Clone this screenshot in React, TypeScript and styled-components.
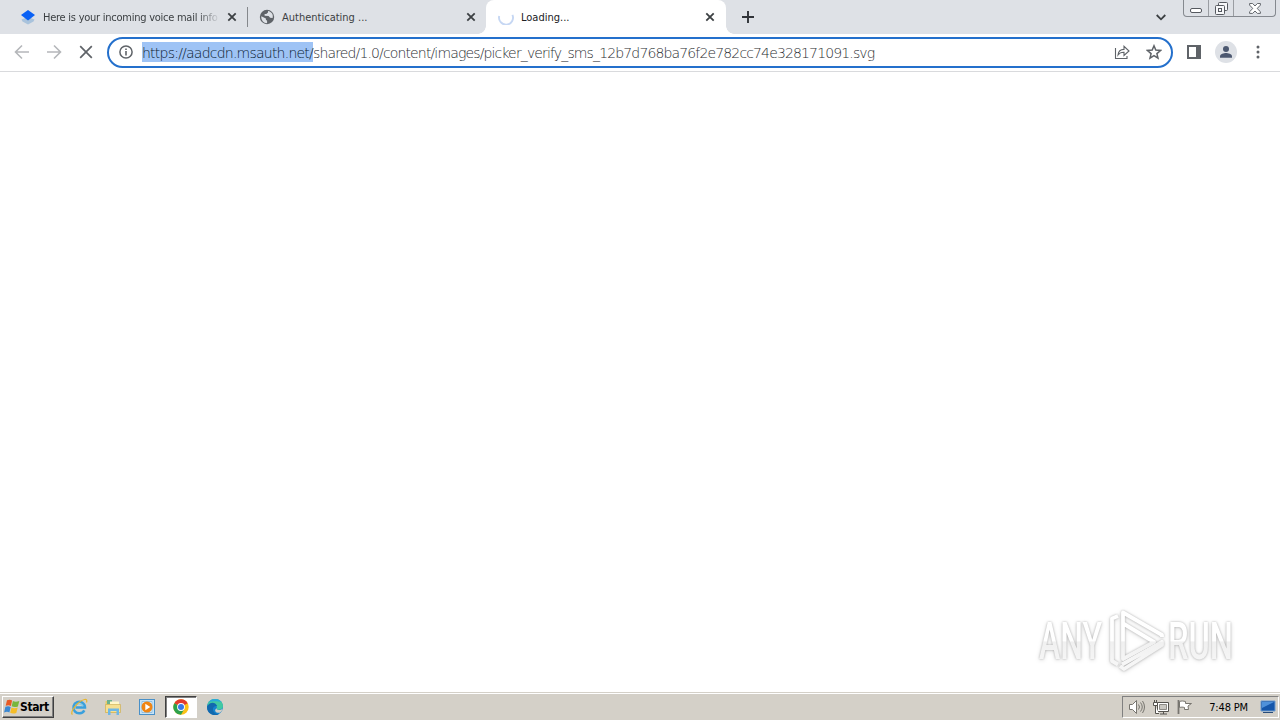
import type { ReactNode } from "react";
import styled, { createGlobalStyle, css } from "styled-components";

const GlobalStyle = createGlobalStyle`
  * {
    box-sizing: border-box;
  }
  body {
    margin: 0;
    overflow: hidden;
    background: #fff;
    font-family: "DejaVu Sans Condensed", "DejaVu Sans", sans-serif;
  }
  svg {
    display: block;
    flex: none;
  }
`;

function CloseIcon() {
  return (
    <svg width="10" height="10" viewBox="0 0 10 10" stroke="#3c4043" strokeWidth="1.8">
      <path d="M1.300 1.300l7.400 7.400M8.700 1.300l-7.400 7.400" />
    </svg>
  );
}

function DropboxIcon() {
  return (
    <svg width="16" height="16" viewBox="0 0 16 16">
      <path d="M1.500 10.500L8 8l6.500 2.500-1 2L8 15.500l-5.500-3z" fill="#a9c3dc" />
      <path d="M8 1l7 5-7 5.400L1 6z" fill="#0a61f5" />
    </svg>
  );
}

function GlobeIcon() {
  return (
    <svg width="16" height="16" viewBox="0 0 16 16">
      <circle cx="8" cy="8" r="7.200" fill="#5f6368" />
      <path d="M2.300 7.200l4.600 2.300v1.300l1.200 1v2.400C4.500 14.100 1.900 11 2.300 7.200zM9 2v1.600L7.300 5H5.600v1.700l4 .3 1.500 1.800 2.500.2c1-3.300-.9-6.300-4.600-7z" fill="#dee1e6" />
    </svg>
  );
}

function Spinner() {
  return (
    <svg width="16" height="16" viewBox="0 0 16 16" fill="none">
      <path d="M1.200 7a7 7 0 1 0 13.200-1.200" stroke="#c6d7f3" strokeWidth="1.900" />
    </svg>
  );
}

function StartFlag() {
  return (
    <svg width="16" height="16" viewBox="0 0 16 16">
      <path d="M3 1.200c2-.8 3.700-.7 5.100.3L6.900 7C5.300 6.100 3.800 6 1.700 6.800z" fill="#e85a24" />
      <path d="M8.900 2c1.800 1 3.700 1 6.400.1l-1.400 5.400c-2.300.8-4.300.8-6.200-.2z" fill="#78b63c" />
      <path d="M1.400 7.800c2.100-.8 3.700-.7 5.300.2l-1.300 5.400c-1.500-.9-3.200-.9-5.300 0z" fill="#3b88d2" />
      <path d="M7.500 8.500c1.900.9 3.800.9 6.200.1l-1.400 5.300c-2.400.8-4.200.8-6.100-.2z" fill="#f5bd28" />
    </svg>
  );
}

function ExplorerIcon() {
  return (
    <svg width="18" height="18" viewBox="0 0 18 18" fill="none">
      <path d="M14.300 12.300A5.800 5.800 0 1 1 15 9.500H5.500" stroke="#3aa0dd" strokeWidth="2.500" />
      <path d="M5.500 8.200c.5-2.800 6.300-3 7.300 0" stroke="#79cdf2" strokeWidth="1.200" />
      <path d="M2.500 16.500C-1 14.500 8 3 14.500 1.500c2.400-.5 2.700 1 2 3" stroke="#e7b62f" strokeWidth="1.200" />
    </svg>
  );
}

function FolderIcon() {
  return (
    <svg width="18" height="18" viewBox="0 0 18 18">
      <path d="M1.500 3h5L8 4.500h7V15H1.500z" fill="#e7cb68" />
      <path d="M3 2h5v4H3z" fill="#6cb18d" />
      <path d="M6 3.500h9v5H6z" fill="#fff7c8" />
      <path d="M1.500 6.500h15v8h-15z" fill="#f5df91" stroke="#c9a94e" strokeWidth=".6" />
      <path d="M4 17v-6.500h11V17h-2.500v-4h-6v4z" fill="#6eb7e5" />
    </svg>
  );
}

function MediaIcon() {
  return (
    <svg width="18" height="18" viewBox="0 0 18 18">
      <rect x="1.500" y="1.500" width="15" height="15" fill="#c6e3f7" stroke="#4990c8" />
      <path d="M4 3.500h10v11H4z" fill="#e9f4fb" stroke="#77afd8" strokeWidth=".7" />
      <circle cx="9" cy="9" r="5.500" fill="#ef8514" />
      <path d="M7.300 5.800v6.400L12.300 9z" fill="#fff" />
    </svg>
  );
}

function ChromeIcon() {
  return (
    <svg width="16" height="16" viewBox="0 0 16 16">
      <circle cx="8" cy="8" r="7.700" fill="#fbc116" />
      <path d="M8 8L1.330 4.150A7.700 7.700 0 0 1 14.670 4.150z" fill="#e33b2e" />
      <path d="M8 8L1.330 4.150A7.700 7.700 0 0 0 8 15.700l3.300-5.800z" fill="#2da14c" />
      <circle cx="8" cy="8" r="3.900" fill="#fff" />
      <circle cx="8" cy="8" r="3" fill="#3978e7" />
    </svg>
  );
}

function EdgeIcon() {
  return (
    <svg width="18" height="18" viewBox="0 0 18 18">
      <circle cx="9" cy="9" r="8" fill="#1684cf" />
      <path d="M1.200 8C2 3.500 5 1 9 1c5 0 8 3.500 8 7 0 2.600-2 3.800-4.200 3.800-2 0-2.700-.8-2-1.800C12 7 6 3.500 1.200 8z" fill="#41c9a2" />
      <path d="M1.200 8c3-4.500 8-4.500 10 0C7.500 7.300 5.500 11 8 14c1 1.500 3 2.300 5 2.200C7 19 0 15 1.200 8z" fill="#1269ae" />
      <path d="M3 4.200C4.500 2 6.500 1 9 1c3 0 5.300 1.300 6.700 3.200C12 3 6.500 2.700 3 4.200z" fill="#29a9dc" />
      <path d="M10.800 10c-.7 1.200.2 2 2 2 1.500 0 2.800-.3 3.800-1.200-.5 1.700-1.300 2.900-2.500 3.900-3.800.8-7-2-3.300-4.700z" fill="#d4d0c8" />
    </svg>
  );
}

function AnyRunMark() {
  return (
    <Watermark width="210" height="76" viewBox="0 0 210 76" fill="none">
      <defs>
        <linearGradient id="markTone" gradientUnits="userSpaceOnUse" x1="0" y1="18" x2="0" y2="60">
          <stop offset=".5" stopColor="#fff" />
          <stop offset=".52" stopColor="#f0f0f0" />
          <stop offset="1" stopColor="#f6f6f6" />
        </linearGradient>
      </defs>
      <g fill="url(#markTone)" fontFamily="Roboto, sans-serif" fontWeight="500" fontSize="51">
        <text x="9" y="57" textLength="63" lengthAdjust="spacingAndGlyphs">ANY</text>
        <text x="138" y="57" textLength="65" lengthAdjust="spacingAndGlyphs">RUN</text>
      </g>
      <g stroke="url(#markTone)" strokeWidth="3.800" strokeLinejoin="round">
        <path d="M88 14l-6 2.500V59l6 3.500" />
        <path d="M132 35v-2L93 10.500V57l31-17-30-18" />
        <path d="M90 64l4 3 38-24v-3L92 62.500" />
      </g>
    </Watermark>
  );
}

interface TabProps {
  icon: ReactNode;
  title: string;
  $active?: boolean;
  $faded?: boolean;
}

function BrowserTab({ icon, title, $active, $faded }: TabProps) {
  return (
    <Tab $active={$active}>
      {icon}
      <TabTitle $faded={$faded}>{title}</TabTitle>
      <CloseIcon />
    </Tab>
  );
}

export default function App() {
  return (
    <Desktop>
      <GlobalStyle />
      <TabStrip>
        <BrowserTab icon={<DropboxIcon />} title="Here is your incoming voice mail info" $faded />
        <TabDivider />
        <BrowserTab icon={<GlobeIcon />} title="Authenticating ..." />
        <BrowserTab icon={<Spinner />} title="Loading..." $active />
        <NewTab>
          <svg width="12" height="12" viewBox="0 0 12 12" stroke="#303338" strokeWidth="1.900">
            <path d="M6 0v12M0 6h12" />
          </svg>
        </NewTab>
        <StripEnd>
          <TabSearch>
            <svg width="10" height="7" viewBox="0 0 10 7" fill="none" stroke="#3c4043" strokeWidth="1.800">
              <path d="M.7 1L5 5.300 9.300 1" />
            </svg>
          </TabSearch>
          <WindowControls>
            <Control $width={24}>
              <svg width="12" height="5" viewBox="0 0 12 5">
                <rect x=".5" y=".5" width="11" height="4" rx="1.500" fill="#fff" stroke="#55595f" />
              </svg>
            </Control>
            <Control $width={25}>
              <svg width="13" height="13" viewBox="0 0 13 13" fill="#f6f7f9" stroke="#55595f">
                <rect x="3.500" y=".5" width="9" height="8" rx="1" />
                <rect x=".5" y="3.500" width="9" height="9" rx="1" />
                <rect x="3.500" y="6.500" width="3" height="3" />
              </svg>
            </Control>
            <Control $width={42}>
              <svg width="12" height="11" viewBox="0 0 12 11" fill="#fff" stroke="#55595f" strokeWidth=".9">
                <path d="M.6.5h3L6 3 8.400.5h3v1.600L8.200 5.500l3.200 3.200v1.700h-3L6 8l-2.400 2.400h-3V8.700l3.200-3.200L.6 2.100z" />
              </svg>
            </Control>
          </WindowControls>
        </StripEnd>
      </TabStrip>

      <Toolbar>
        <NavButtons>
          <svg width="16" height="16" viewBox="0 0 16 16" fill="none" stroke="#b5b7ba" strokeWidth="1.600">
            <path d="M15 8H2M8 1.500L1.500 8 8 14.500" />
          </svg>
          <svg width="16" height="16" viewBox="0 0 16 16" fill="none" stroke="#b5b7ba" strokeWidth="1.600">
            <path d="M1 8h13M8 1.500L14.500 8 8 14.500" />
          </svg>
          <svg width="16" height="16" viewBox="0 0 16 16" stroke="#5f6368" strokeWidth="1.700">
            <path d="M2.200 2.200l11.600 11.600M13.800 2.200L2.200 13.800" />
          </svg>
        </NavButtons>
        <Omnibox>
          <svg width="14" height="14" viewBox="0 0 14 14" fill="none" stroke="#5f6368">
            <circle cx="7" cy="7" r="6.100" strokeWidth="1.500" />
            <path d="M7 6v4.500M7 3.400v1.500" strokeWidth="1.600" />
          </svg>
          <Address>
            <Selected>https://aadcdn.msauth.net/</Selected>
            <AddressRest>shared/1.0/content/images/picker_verify_sms_12b7d768ba76f2e782cc74e328171091.svg</AddressRest>
          </Address>
          <OmniboxActions>
            <svg width="16" height="16" viewBox="0 0 16 16" fill="none" stroke="#5f6368" strokeWidth="1.100">
              <path d="M1.500 4v10.500h11.500V12" />
              <path d="M4 11c.4-3.700 2.300-5.600 6-5.600V2.300L15 7l-5 4.500V8.300C7.500 8.200 5.500 9 4 11z" />
            </svg>
            <svg width="16" height="16" viewBox="0 0 16 16" fill="none" stroke="#5f6368" strokeWidth="1.500">
              <path d="M8 1.800l1.800 4.300 4.700.4-3.600 3.100 1.100 4.600L8 11.700l-4 2.500 1.100-4.600-3.600-3.100 4.700-.4z" />
            </svg>
          </OmniboxActions>
        </Omnibox>
        <ToolbarEnd>
          <svg width="14" height="14" viewBox="0 0 14 14">
            <path d="M0 0h14v14H0zM2 2v10h7V2z" fill="#5f6368" fillRule="evenodd" />
          </svg>
          <svg width="22" height="22" viewBox="0 0 22 22">
            <circle cx="11" cy="11" r="11" fill="#dee1e6" />
            <circle cx="11" cy="8" r="3" fill="#4c5870" />
            <path d="M5 16.700v-1.500c0-2 4-3.200 6-3.200s6 1.200 6 3.200v1.500z" fill="#4c5870" />
          </svg>
          <MenuDots width="4" height="14" viewBox="0 0 4 14" fill="#5f6368">
            <circle cx="2" cy="2" r="1.500" />
            <circle cx="2" cy="7" r="1.500" />
            <circle cx="2" cy="12" r="1.500" />
          </MenuDots>
        </ToolbarEnd>
      </Toolbar>

      <Viewport>
        <AnyRunMark />
      </Viewport>

      <Taskbar>
        <StartButton>
          <StartFlag />
          <span>Start</span>
        </StartButton>
        <QuickLaunch>
          <TaskButton><ExplorerIcon /></TaskButton>
          <TaskButton><FolderIcon /></TaskButton>
          <TaskButton><MediaIcon /></TaskButton>
          <TaskButton $pressed><ChromeIcon /></TaskButton>
          <TaskButton><EdgeIcon /></TaskButton>
        </QuickLaunch>
        <Tray>
          <svg width="18" height="16" viewBox="0 0 18 16" fill="none" stroke="#77756f">
            <path d="M1.500 5.500h3l4-4v13l-4-4h-3z" fill="#fff" />
            <path d="M10.500 5.500q2 2.500 0 5M12.500 3.500q3.500 4.500 0 9M14.500 2q4 6 0 12" />
          </svg>
          <svg width="18" height="16" viewBox="0 0 18 16" fill="#fff" stroke="#55534e">
            <path d="M5.500 3.500h11v9h-11z" />
            <path d="M7.500 5.500h7v5h-7z" fill="#c9c7c1" stroke="#8d8b86" />
            <path d="M8 15h7M11.500 13v2M1.500 3.500v3h4v-3zM2.500 1v2M4.500 1v2M3.500 7v7.500H7" />
          </svg>
          <svg width="18" height="16" viewBox="0 0 18 16" fill="#fff" stroke="#77756f">
            <path d="M2.500 1v14" strokeWidth="1.800" />
            <path d="M3.500 2.500c2-.8 4-.5 6 0v2h6l-3.500 2.500.500 3.500h-4v-2c-2-.5-3-.5-5 0z" />
          </svg>
          <Clock>7:48 PM</Clock>
          <svg width="16" height="14" viewBox="0 0 16 14">
            <path d="M1 1h14v10H1z" fill="#1556aa" stroke="#6f9bce" />
            <path d="M2 2h12L2 8z" fill="#4f91da" />
            <path d="M3 12.500h10" stroke="#284c7a" />
          </svg>
        </Tray>
      </Taskbar>
    </Desktop>
  );
}

const Desktop = styled.div`
  display: flex;
  flex-direction: column;
  width: 1280px;
  height: 720px;
  background: #fff;
`;

const TabStrip = styled.div`
  display: flex;
  height: 34px;
  padding-left: 8px;
  background: #dee1e6;
`;

const Tab = styled.div<{ $active?: boolean }>`
  display: flex;
  align-items: center;
  width: 239px;
  height: 34px;
  padding: 0 10px 0 12px;
  color: #3c4043;

  ${({ $active }) =>
    $active &&
    css`
      position: relative;
      width: 240px;
      background: #fff;
      border-radius: 8px 8px 0 0;
      color: #202124;
      padding-right: 11px;

      &::before,
      &::after {
        content: "";
        position: absolute;
        bottom: 0;
        width: 8px;
        height: 8px;
      }
      &::before {
        right: 100%;
        background: radial-gradient(circle at 0 0, transparent 7.5px, #fff 8px);
      }
      &::after {
        left: 100%;
        background: radial-gradient(circle at 100% 0, transparent 7.5px, #fff 8px);
      }
    `}
`;

const TabTitle = styled.span<{ $faded?: boolean }>`
  flex: 1;
  min-width: 0;
  margin: 0 6px 0 7px;
  padding-top: 1px;
  white-space: nowrap;
  font-size: 11px;
  line-height: 16px;
  ${({ $faded }) =>
    $faded &&
    css`
      letter-spacing: -0.25px;
      mask-image: linear-gradient(to right, #000 155px, transparent 177px);
    `}
`;

const TabDivider = styled.div`
  width: 1px;
  height: 20px;
  margin: 7px -1px 0 0;
  background: #85888c;
`;

const NewTab = styled.div`
  display: flex;
  align-items: center;
  justify-content: center;
  width: 44px;
`;

const StripEnd = styled.div`
  display: flex;
  margin-left: auto;
  padding-right: 4px;
`;

const TabSearch = styled.div`
  display: flex;
  align-items: center;
  width: 27px;
`;

const WindowControls = styled.div`
  display: flex;
  height: 17px;
  border: 1px solid #85898f;
  border-top: 0;
  border-radius: 0 0 4px 4px;
`;

const Control = styled.div<{ $width: number }>`
  display: flex;
  align-items: center;
  justify-content: center;
  width: ${({ $width }) => $width}px;

  &:first-child {
    padding-top: 4px;
  }

  & + & {
    border-left: 1px solid #9a9da2;
  }
`;

const Toolbar = styled.div`
  display: flex;
  align-items: center;
  height: 38px;
  padding: 0 19px 1px 14px;
  border-bottom: 1px solid #d9dadd;
`;

const NavButtons = styled.div`
  display: flex;
  gap: 16px;
  width: 93px;
`;

const Omnibox = styled.div`
  display: flex;
  align-items: center;
  width: 1066px;
  height: 31px;
  padding: 0 9px 0 10px;
  border: 2px solid #2470cc;
  border-radius: 16px;
`;

const Address = styled.div`
  flex: 1;
  display: flex;
  margin-left: 9px;
  white-space: nowrap;
  font-family: "DejaVu Sans", sans-serif;
  font-weight: 200;
  font-size: 14px;
`;

const Selected = styled.span`
  width: 171px;
  padding-top: 2px;
  line-height: 18px;
  background: #9ec3f5;
  color: #0c1c30;
  letter-spacing: -0.77px;
`;

const AddressRest = styled.span`
  padding-top: 2px;
  line-height: 18px;
  color: #2b2e31;
  letter-spacing: -0.86px;
`;

const OmniboxActions = styled.div`
  display: flex;
  gap: 16px;
`;

const ToolbarEnd = styled.div`
  display: flex;
  align-items: center;
  gap: 14px;
  flex: 1;
  padding-left: 14px;
`;

const MenuDots = styled.svg`
  margin-left: 5px;
`;

const Viewport = styled.main`
  display: flex;
  flex: 1;
  align-items: flex-end;
  justify-content: flex-end;
  padding: 0 40px 14px 0;
`;

const Watermark = styled.svg`
  overflow: visible;
  filter: drop-shadow(0 0 1px rgba(0, 0, 0, 0.25)) drop-shadow(0 1px 2px rgba(0, 0, 0, 0.14));
`;

const Taskbar = styled.footer`
  display: flex;
  height: 28px;
  padding: 2px 1px 1px 2px;
  background: #d4d0c8;
  border-top: 1px solid #d4d0c8;
  box-shadow: inset 0 1px #fff;
`;

const raised = css`
  border: 1px solid;
  border-color: #fff #404040 #404040 #fff;
  box-shadow: inset -1px -1px #808080;
`;

const StartButton = styled.div`
  display: flex;
  align-items: center;
  width: 52px;
  height: 22px;
  margin-top: 1px;
  padding-left: 1px;
  font-size: 12px;
  font-weight: bold;
  letter-spacing: -0.4px;
  color: #000;
  ${raised}
`;

const QuickLaunch = styled.div`
  display: flex;
  gap: 2px;
  margin: 1px 0 0 9px;
`;

const TaskButton = styled.div<{ $pressed?: boolean }>`
  display: flex;
  align-items: center;
  justify-content: center;
  width: 32px;
  height: 22px;

  ${({ $pressed }) =>
    $pressed &&
    css`
      background: #fff;
      border: 1px solid;
      border-color: #404040 #fff #fff #404040;
      box-shadow: inset 1px 1px #808080;
    `}
`;

const Tray = styled.div`
  display: flex;
  align-items: center;
  gap: 6px;
  width: 157px;
  height: 22px;
  margin: 1px 0 0 auto;
  padding: 0 2px 0 5px;
  border: 1px solid;
  border-color: #808080 #fff #fff #808080;
`;

const Clock = styled.span`
  flex: 1;
  text-align: right;
  white-space: nowrap;
  font-size: 11px;
  letter-spacing: -0.15px;
  color: #000;
  margin-right: 6px;
`;
